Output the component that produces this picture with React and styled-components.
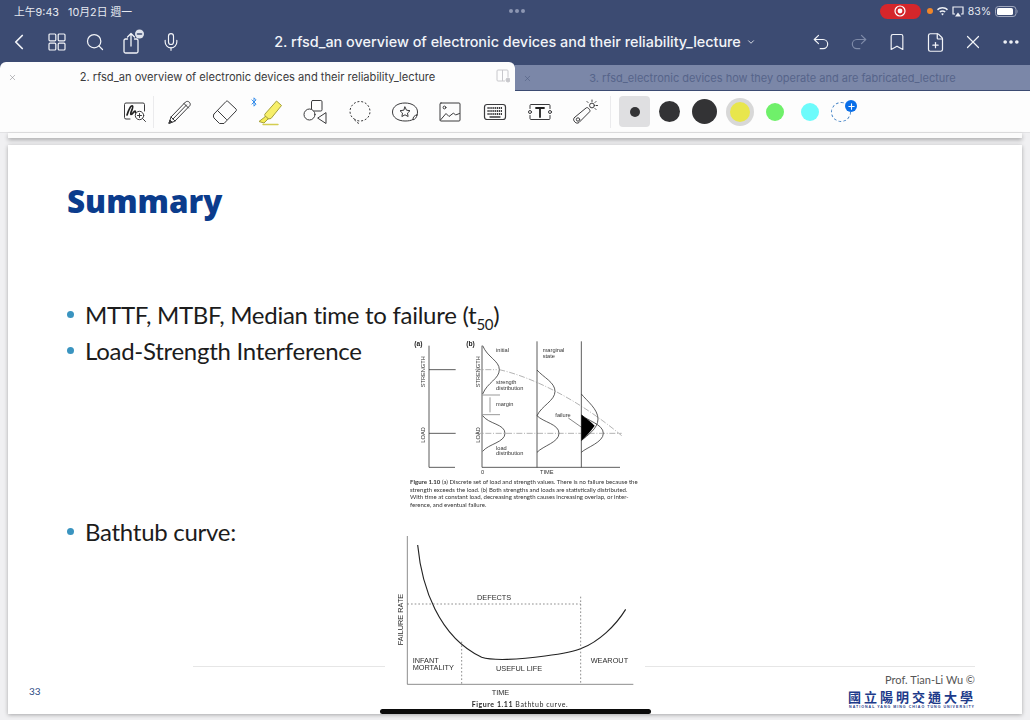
import styled, { createGlobalStyle } from "styled-components";
import { ChevronLeft, ChevronDown, Search, Mic, Undo2, Redo2, Bookmark, FilePlus, X, MoreHorizontal, Bluetooth, Plus } from "lucide-react";

const Global = createGlobalStyle`
  html, body {
    margin: 0;
    padding: 0;
    height: 720px;
    overflow: hidden;
    background: #eeeef0;
    font-family: Inter, "Noto Sans CJK TC", sans-serif;
  }
`;

const Screen = styled.div`
  position: relative;
  width: 1030px;
  height: 720px;
  overflow: hidden;
  display: flex;
  flex-direction: column;
`;

const Header = styled.div`
  background: #3c4b72;
  height: 91px;
  flex-shrink: 0;
  display: flex;
  flex-direction: column;
`;

const StatusBar = styled.div`
  height: 22px;
  padding: 0 11px 0 14px;
  display: grid;
  grid-template-columns: 1fr auto 1fr;
  align-items: center;
  color: #e6e9f0;
  font-size: 10.5px;
`;

const StatusLeft = styled.div`
  display: flex;
  gap: 9px;
  font-size: 10.8px;
`;

const StatusDots = styled.div`
  display: flex;
  gap: 2px;
`;

const Dot = styled.span`
  width: 4px;
  height: 4px;
  border-radius: 50%;
  background: #8d97b3;
`;

const StatusRight = styled.div`
  display: flex;
  justify-content: flex-end;
  align-items: center;
  gap: 4px;
`;

const RecPill = styled.div`
  width: 41px;
  height: 15px;
  border-radius: 8px;
  background: #d5262b;
  display: flex;
  align-items: center;
  justify-content: center;
  margin-right: 2px;
`;

const OrangeDot = styled.span`
  width: 6px;
  height: 6px;
  border-radius: 50%;
  background: #f0862a;
`;

const NavBar = styled.div`
  height: 40px;
  display: grid;
  grid-template-columns: 1fr auto 1fr;
  align-items: center;
`;

const NavGroup = styled.div`
  display: flex;
  justify-content: ${(p) => (p.$end ? "flex-end" : "flex-start")};
`;

const NavBtn = styled.div`
  width: 38px;
  height: 38px;
  display: flex;
  align-items: center;
  justify-content: center;
  color: ${(p) => (p.$dim ? "#7e8aa8" : "#f2f4f8")};
`;

const DocTitle = styled.div`
  color: #f2f4f8;
  font-size: 14.4px;
  font-weight: 500;
  margin-top: -1px;
  display: flex;
  align-items: center;
  gap: 5px;
  white-space: nowrap;
`;

const Tabs = styled.div`
  height: 29px;
  display: grid;
  grid-template-columns: 515px 515px;
  align-items: end;
`;

const Tab = styled.div`
  position: relative;
  height: ${(p) => (p.$active ? "29px" : "25px")};
  margin-bottom: ${(p) => (p.$active ? "0" : "1px")};
  background: ${(p) => (p.$active ? "#fdfdfd" : "#7b87a8")};
  color: ${(p) => (p.$active ? "#3a3a3c" : "#56648a")};
  border-radius: ${(p) => (p.$active ? "6px 6px 0 0" : "0")};
  display: flex;
  align-items: center;
  justify-content: center;
  font-size: ${(p) => (p.$active ? "11.12px" : "11px")};
  white-space: nowrap;
`;

const TabClose = styled.span`
  position: absolute;
  left: 8px;
  top: 50%;
  margin-top: -4px;
  display: flex;
  color: ${(p) => (p.$active ? "#8a8a8e" : "#4f5c80")};
`;

const TabSplit = styled.svg`
  position: absolute;
  right: 5px;
  top: 7px;
`;

const Toolbar = styled.div`
  height: 41px;
  flex-shrink: 0;
  background: #fdfdfd;
  border-bottom: 1px solid #e2e2e4;
  display: flex;
  align-items: center;
  padding-left: 117px;
`;

const Tool = styled.div`
  position: relative;
  width: ${(p) => (p.$narrow ? "36px" : "45px")};
  height: 36px;
  display: flex;
  align-items: center;
  justify-content: center;
`;

const ToolDivider = styled.div`
  width: 1px;
  height: 32px;
  background: #ebebed;
  margin: ${(p) => p.$margin};
`;

const BluetoothMark = styled.span`
  position: absolute;
  left: 1.5px;
  top: 3.5px;
  display: flex;
  color: #2a86e8;
`;

const Swatch = styled.div`
  position: relative;
  width: 35px;
  height: 36px;
  display: flex;
  align-items: center;
  justify-content: center;
`;

const SwatchBox = styled.div`
  width: 31px;
  height: 31px;
  border-radius: 4px;
  background: ${(p) => (p.$on ? "#dfdfe1" : "transparent")};
  display: flex;
  align-items: center;
  justify-content: center;
`;

const SwatchDot = styled.div`
  width: ${(p) => p.$size}px;
  height: ${(p) => p.$size}px;
  border-radius: 50%;
  background: ${(p) => p.$color};
  box-shadow: ${(p) => (p.$ring ? "0 0 0 4px #d8d8d8" : "none")};
`;

const AddRing = styled.div`
  width: 18px;
  height: 18px;
  border-radius: 50%;
  border: 1px dashed #3d7fc4;
  margin-right: 7px;
`;

const AddBadge = styled.span`
  position: absolute;
  left: 18px;
  top: 6.5px;
  width: 12px;
  height: 12px;
  border-radius: 50%;
  background: #0a6fe8;
  color: #fff;
  display: flex;
  align-items: center;
  justify-content: center;
`;

const Reader = styled.div`
  flex: 1;
  padding: 0 8px;
  display: flex;
  flex-direction: column;
  background: #f0f0f2;
`;

const PrevPage = styled.div`
  height: 5px;
  overflow: hidden;
  background: #fbfbfb;
  display: flex;
  justify-content: flex-end;
  padding-right: 50px;
  box-shadow: 0 2px 4px rgba(0, 0, 0, 0.3);
`;

const PrevText = styled.span`
  font-size: 6.5px;
  line-height: 6px;
  color: #555;
  margin-top: -5px;
  filter: blur(0.3px);
`;

const Slide = styled.div`
  position: relative;
  margin-top: 7px;
  height: 569px;
  overflow: hidden;
  background: #fff;
  box-shadow: 0 1px 4px rgba(0, 0, 0, 0.3);
  padding: 36px 0 0 59px;
  box-sizing: border-box;
  font-family: Lato, sans-serif;
`;

const SlideTitle = styled.h1`
  margin: 0;
  height: 40px;
  line-height: 40px;
  font-family: "Open Sans", sans-serif;
  font-size: 31.4px;
  font-weight: 800;
  color: #0b3c8c;
`;

const BulletList = styled.div`
  margin-top: 75px;
  display: flex;
  flex-direction: column;
`;

const Row = styled.div`
  display: flex;
  align-items: flex-start;
`;

const Bullet = styled.div`
  width: ${(p) => p.$width || 800}px;
  height: 36px;
  flex-shrink: 0;
  display: flex;
  align-items: center;
  gap: 11px;
  font-size: 24px;
  letter-spacing: -0.28px;
  color: #1c1c1c;
  white-space: nowrap;
  &::before {
    content: "";
    width: 7px;
    height: 7px;
    border-radius: 50%;
    background: #3a94c0;
  }
`;

const Sub = styled.sub`
  font-size: 15px;
  line-height: 0;
`;

const Figure = styled.div`
  position: relative;
  z-index: 1;
  margin-top: ${(p) => p.$top}px;
  width: ${(p) => p.$width}px;
  background: #fff;
  filter: blur(0.3px);
`;

const Caption = styled.div`
  margin: -36px 0 0 10px;
  padding-bottom: 5.6px;
  font-family: Lato, sans-serif;
  font-size: 6.05px;
  line-height: 7.6px;
  color: #333;
  white-space: nowrap;
  span { display: block; }
  b { font-weight: 700; }
`;

const PageNumber = styled.div`
  position: absolute;
  left: 21px;
  bottom: 17px;
  font-size: 10px;
  color: #2b4a84;
`;

const FooterLine = styled.div`
  position: absolute;
  left: 185px;
  right: 47px;
  top: 521px;
  height: 1px;
  background: #e6e6e6;
`;

const Footer = styled.div`
  position: absolute;
  z-index: 2;
  right: 47px;
  bottom: 4px;
  display: flex;
  flex-direction: column;
  align-items: flex-end;
`;

const Prof = styled.div`
  font-size: 11px;
  color: #555;
  margin-bottom: 3px;
`;

const SchoolZh = styled.div`
  font-family: "Noto Sans CJK TC", sans-serif;
  font-size: 13px;
  line-height: 15px;
  letter-spacing: 3px;
  margin-right: -1px;
  font-weight: 700;
  color: #1d3a8a;
`;

const SchoolEn = styled.div`
  font-family: "Liberation Sans", sans-serif;
  font-size: 3.6px;
  line-height: 5px;
  margin-top: 1.5px;
  letter-spacing: 1px;
  font-weight: 700;
  color: #1d3a8a;
`;

const HomeBar = styled.div`
  position: absolute;
  z-index: 2;
  left: 380px;
  bottom: 6px;
  width: 271px;
  height: 5px;
  border-radius: 3px;
  background: #0b0b0b;
`;

const ToolSvg = ({ children }) => (
  <svg width="28" height="28" viewBox="0 0 28 28" fill="none" stroke="#3a3a3c" strokeWidth="1" strokeLinecap="round" strokeLinejoin="round">
    {children}
  </svg>
);

const InkZoom = () => (
  <ToolSvg>
    <path d="M9 21H5a1.5 1.5 0 0 1-1.5-1.5V6.500A1.500 1.500 0 0 1 5 5h17a1.500 1.500 0 0 1 1.500 1.500V13" />
    <path d="M6 17c2-6 4-10 5.500-9s-3 8-1.500 8.500 3-4 4-3.500 0 3 2 2.500" strokeWidth="1.700" stroke="#222" />
    <circle cx="18.500" cy="17.500" r="4.200" fill="#fdfdfd" />
    <path d="M21.500 20.500l3 3M18.500 15.500v4M16.500 17.500h4" />
  </ToolSvg>
);

const Pencil = () => (
  <ToolSvg>
    <path d="M3 25l2-6L19.500 4c1.200-1 3-.8 4 .4s1 2.800 0 3.600L9 23z" />
    <path d="M5 19l4 4M18 5.500l4.500 4.500M7 21L20.500 7" />
    <path d="M3 25l1-3 2 2z" fill="#3a3a3c" />
  </ToolSvg>
);

const Eraser = () => (
  <ToolSvg>
    <path d="M3 16L15 3.500c.6-.6 1.400-.6 2 0l8 7.500c.6.600.6 1.400 0 2L13 25.500H8.500L3 20c-.8-.800-.8-3.200 0-4z" />
    <path d="M6.500 12.500L15.500 21.500" />
  </ToolSvg>
);

const Highlighter = () => (
  <ToolSvg>
    <path d="M9 16L20.500 3l5 4.500L15 20.500l-3 .5-2.500-2z" fill="#f7ef6a" stroke="#a5a03a" />
    <path d="M9.500 18.500L3 23.500l5 1.500 4-4z" fill="#f5ec55" stroke="#a5a03a" />
    <path d="M7 26.500h15" stroke="#d4cd50" strokeWidth="1.400" />
  </ToolSvg>
);

const Shapes = () => (
  <ToolSvg>
    <rect x="10.500" y="2.500" width="10.500" height="10.500" rx="1.200" />
    <circle cx="8.500" cy="16.500" r="5.500" fill="#fdfdfd" />
    <path d="M25 15v10.500l-8-5.200z" />
  </ToolSvg>
);

const Lasso = () => (
  <svg width="28" height="28" viewBox="0 0 28 28" fill="none" stroke="#3a3a3c" strokeWidth="1" strokeDasharray="2 1.800">
    <path d="M9 21.500C6 20 4 17 4 13.500 4 8 8.500 3.500 14 3.500S24 8 24 13.500 19.500 23 14 23c-1.800 0-3.500-.4-5-1.500zM9 21.500c0 2 2 3 4 4" />
  </svg>
);

const Sticker = () => (
  <ToolSvg>
    <path d="M22 21.500c-2 1.200-5 1.500-8 1.500C7 23 1.500 19.500 1.500 14S7 5 14 5s12.500 3.500 12.500 9c0 1.200-.2 2.500-.7 3.500" />
    <path d="M26 17c-.3 2.500-2 4.500-4 4.800-.3-2.500 1.500-4.800 4-4.800z" />
    <path d="M14 9l1.500 3.200 3.500.5-2.500 2.400.6 3.400-3.100-1.700-3.100 1.700.6-3.400L9 12.700l3.500-.5z" />
  </ToolSvg>
);

const Picture = () => (
  <ToolSvg>
    <rect x="4" y="5" width="20" height="18" rx="1" />
    <circle cx="8.500" cy="9.500" r="1.400" />
    <path d="M4.500 22l5.500-6.500 3 3 4.500-3.500 2 2 4-1.500" />
  </ToolSvg>
);

const Keyboard = () => (
  <ToolSvg>
    <rect x="3.500" y="6.500" width="21" height="15" rx="2.500" strokeWidth="1.200" />
    <path d="M6.500 10h15M6.500 13h15M6.500 16h15" strokeWidth="1.800" strokeDasharray="1.200 0.700" strokeLinecap="butt" />
    <path d="M9 19h10" strokeWidth="1.300" />
  </ToolSvg>
);

const TextBox = () => (
  <ToolSvg>
    <path d="M4 10.500V7.500A1 1 0 0 1 5 6.500h18a1 1 0 0 1 1 1v3M4 17.500v3a1 1 0 0 0 1 1h18a1 1 0 0 0 1-1v-3" />
    <circle cx="4" cy="14" r="1.500" />
    <circle cx="24" cy="14" r="1.500" />
    <path d="M10 10h8M14 10v9" strokeWidth="1.800" stroke="#222" />
  </ToolSvg>
);

const Laser = () => (
  <ToolSvg>
    <path d="M3.500 19.500L15 10c.8-.6 1.800-.5 2.400.2l1.200 1.500c.6.800.5 1.700-.2 2.300L8 24.500c-1.200 1-3 .8-4-.4l-.8-1c-.9-1.200-.8-2.700.3-3.600z" />
    <circle cx="7" cy="21.500" r="1.700" />
    <circle cx="21" cy="7.500" r="2.400" />
    <path d="M21 2v1.500M26.500 7.500H25M25 3.500l-1 1M25 11.500l-1-1M16 3.500l1 1" />
  </ToolSvg>
);

const GridIcon = () => (
  <svg width="18" height="18" viewBox="0 0 18 18" fill="none" stroke="currentColor" strokeWidth="1.200">
    <rect x="1" y="1" width="6.800" height="6.800" rx="1" />
    <rect x="10.200" y="1" width="6.800" height="6.800" rx="1" />
    <rect x="1" y="10.200" width="6.800" height="6.800" rx="1" />
    <rect x="10.200" y="10.200" width="6.800" height="6.800" rx="1" />
  </svg>
);

const ShareIcon = () => (
  <svg width="24" height="26" viewBox="0 0 24 26" fill="none" stroke="currentColor" strokeWidth="1.300" strokeLinecap="round" strokeLinejoin="round">
    <path d="M6.500 10H4.500a1.500 1.500 0 0 0-1.500 1.500v11A1.500 1.500 0 0 0 4.500 24h11a1.500 1.500 0 0 0 1.500-1.500v-11A1.500 1.500 0 0 0 15.500 10h-2" />
    <path d="M10 17V5M6.500 8L10 4.500 13.500 8" />
    <circle cx="18.500" cy="5" r="4.500" fill="#dfe3ec" stroke="none" />
    <path d="M16.500 5h4" stroke="#3c4b72" strokeWidth="1.600" />
  </svg>
);

const WifiIcon = () => (
  <svg width="11" height="9" viewBox="0 0 11 9" fill="#eef0f5">
    <path d="M5.500 0C3.400 0 1.500.8 0 2.200l1.100 1.200C2.300 2.300 3.800 1.600 5.500 1.600s3.200.7 4.400 1.800L11 2.200C9.500.8 7.600 0 5.500 0z" />
    <path d="M5.500 3.200c-1.200 0-2.300.5-3.200 1.200l1.100 1.200c.6-.5 1.300-.8 2.100-.8s1.500.3 2.100.8l1.100-1.200c-.9-.8-2-1.200-3.200-1.200z" />
    <path d="M5.500 6.200c-.6 0-1 .2-1.400.5L5.500 8.500l1.400-1.800c-.4-.3-.8-.5-1.400-.5z" />
  </svg>
);

const AirplayIcon = () => (
  <svg width="12" height="11" viewBox="0 0 12 11" fill="none" stroke="#eef0f5" strokeWidth="1.200">
    <path d="M3 8H1V1h10v7H9" />
    <path d="M6 6.500L9 10.500H3z" fill="#eef0f5" stroke="none" />
  </svg>
);

const BatteryIcon = () => (
  <svg width="24" height="11" viewBox="0 0 24 11" fill="none">
    <rect x="0.500" y="0.500" width="20.500" height="10" rx="3" stroke="#a0a8be" />
    <rect x="2" y="2" width="16" height="7" rx="1.600" fill="#fff" />
    <path d="M22.500 3.800c.7.300.7 3.100 0 3.400z" fill="#a0a8be" />
  </svg>
);

const RecordIcon = () => (
  <svg width="12" height="12" viewBox="0 0 12 12" fill="none">
    <circle cx="6" cy="6" r="5" stroke="#fff" strokeWidth="1.200" />
    <circle cx="6" cy="6" r="2.400" fill="#fff" />
  </svg>
);

const LoadStrengthChart = () => (
  <svg width="250" height="180" viewBox="0 0 750 540" style={{ display: "block" }} fontFamily="Liberation Sans, sans-serif" fontSize="17" fill="#333">
    <g fill="none" stroke="#333" strokeWidth="2.400">
      <path d="M87 35V400H165M87 107H167M87 298H167" />
      <path d="M246 35V400H660M411 22V400M544 22V400" />
      <path d="M248 35C262 70 298 80 298 107C298 135 262 145 248 180" />
      <path d="M248 245C265 270 315 270 315 298C315 325 265 330 248 352" />
      <path d="M411 108C430 130 465 145 465 172C465 200 425 215 411 245" />
      <path d="M411 245C430 265 477 270 477 298C477 325 430 335 411 355" />
      <path d="M544 180C560 200 594 225 594 255C594 285 560 305 544 320" />
      <path d="M544 242C560 260 610 270 610 298C610 325 560 340 544 355" />
      <path d="M248 183H300M248 242H300M270 190V235" strokeWidth="1.500" />
      <path d="M505 252L552 285" strokeWidth="1.800" />
      <path d="M225 107H290M298 107C400 130 540 200 665 305M225 298H665" strokeWidth="1.500" strokeDasharray="18 5 3 5" stroke="#666" />
    </g>
    <path d="M544 242C555 250 575 265 584 275C570 295 555 310 544 320Z" fill="#000" />
    <text x="43" y="35" fontSize="20" fontWeight="700" fill="#222">(a)</text>
    <text x="199" y="35" fontSize="20" fontWeight="700" fill="#222">(b)</text>
    <text transform="translate(74 160) rotate(-90)">STRENGTH</text>
    <text transform="translate(74 326) rotate(-90)">LOAD</text>
    <text transform="translate(241 160) rotate(-90)">STRENGTH</text>
    <text transform="translate(241 326) rotate(-90)">LOAD</text>
    <text x="288" y="55">initial</text>
    <text x="428" y="55">marginal</text>
    <text x="428" y="71">state</text>
    <text x="288" y="150">strength</text>
    <text x="288" y="167">distribution</text>
    <text x="288" y="217">margin</text>
    <text x="466" y="250">failure</text>
    <text x="288" y="347">load</text>
    <text x="288" y="364">distribution</text>
    <text x="243" y="419">0</text>
    <text x="420" y="420">TIME</text>
  </svg>
);

const BathtubChart = () => (
  <svg width="260" height="190" viewBox="0 0 780 570" style={{ display: "block" }} fontFamily="Liberation Sans, sans-serif" fontSize="22" fill="#2c2c2c">
    <g fill="none" stroke="#222">
      <path d="M67 18V463H745" strokeWidth="2" stroke="#555" />
      <path d="M98 45C110 170 160 320 290 382C320 392 400 390 480 378C530 372 570 365 590 355C640 335 690 290 722 238" strokeWidth="3.400" />
      <path d="M67 222H587M587 200V463M230 335V463" strokeWidth="2.200" strokeDasharray="5 6" stroke="#666" />
    </g>
    <text x="276" y="211">DEFECTS</text>
    <text transform="translate(53 346) rotate(-90)">FAILURE RATE</text>
    <text x="83" y="398">INFANT</text>
    <text x="83" y="420">MORTALITY</text>
    <text x="333" y="424">USEFUL LIFE</text>
    <text x="617" y="399">WEAROUT</text>
    <text x="320" y="494">TIME</text>
    <text x="260" y="530" fontSize="21" fontFamily="Lato, sans-serif" textLength="288" lengthAdjust="spacing"><tspan fontWeight="700">Figure 1.11</tspan>{"  Bathtub curve."}</text>
  </svg>
);

const colors = [
  { size: 21, color: "#333335" },
  { size: 25, color: "#333335" },
  { size: 20, color: "#e8e64c", ring: true },
  { size: 18, color: "#6ff06a" },
  { size: 18, color: "#6dfbfb" },
];

const App = () => (
  <Screen>
    <Global />
    <Header>
      <StatusBar>
        <StatusLeft>
          <span>上午9:43</span>
          <span>10月2日 週一</span>
        </StatusLeft>
        <StatusDots>
          <Dot /><Dot /><Dot />
        </StatusDots>
        <StatusRight>
          <RecPill><RecordIcon /></RecPill>
          <OrangeDot />
          <WifiIcon />
          <AirplayIcon />
          <span>83%</span>
          <BatteryIcon />
        </StatusRight>
      </StatusBar>
      <NavBar>
        <NavGroup>
          <NavBtn><ChevronLeft size={26} strokeWidth={1.6} /></NavBtn>
          <NavBtn><GridIcon /></NavBtn>
          <NavBtn><Search size={20} strokeWidth={1.5} /></NavBtn>
          <NavBtn><ShareIcon /></NavBtn>
          <NavBtn><Mic size={20} strokeWidth={1.4} /></NavBtn>
        </NavGroup>
        <DocTitle>
          2. rfsd_an overview of electronic devices and their reliability_lecture
          <ChevronDown size={10} strokeWidth={2} />
        </DocTitle>
        <NavGroup $end>
          <NavBtn><Undo2 size={20} strokeWidth={1.4} /></NavBtn>
          <NavBtn $dim><Redo2 size={20} strokeWidth={1.4} /></NavBtn>
          <NavBtn><Bookmark size={20} strokeWidth={1.4} /></NavBtn>
          <NavBtn><FilePlus size={21} strokeWidth={1.4} /></NavBtn>
          <NavBtn><X size={22} strokeWidth={1.3} /></NavBtn>
          <NavBtn><MoreHorizontal size={20} strokeWidth={2.4} /></NavBtn>
        </NavGroup>
      </NavBar>
      <Tabs>
        <Tab $active>
          <TabClose $active><X size={9} strokeWidth={1.5} /></TabClose>
          2. rfsd_an overview of electronic devices and their reliability_lecture
          <TabSplit width="14" height="14" viewBox="0 0 14 14" fill="none" stroke="#c8c8cc">
            <path d="M9 12H2a1 1 0 0 1-1-1V2a1 1 0 0 1 1-1h9a1 1 0 0 1 1 1v6M6.500 1v11" />
            <circle cx="12" cy="11" r="2" fill="#c8c8cc" />
          </TabSplit>
        </Tab>
        <Tab>
          <TabClose><X size={9} strokeWidth={1.5} /></TabClose>
          3. rfsd_electronic devices how they operate and are fabricated_lecture
        </Tab>
      </Tabs>
    </Header>

    <Toolbar>
      <Tool $narrow><InkZoom /></Tool>
      <ToolDivider $margin="0 3.500px 0 0" />
      <Tool><Pencil /></Tool>
      <Tool><Eraser /></Tool>
      <Tool>
        <BluetoothMark><Bluetooth size={10} strokeWidth={2.2} /></BluetoothMark>
        <Highlighter />
      </Tool>
      <Tool><Shapes /></Tool>
      <Tool><Lasso /></Tool>
      <Tool><Sticker /></Tool>
      <Tool><Picture /></Tool>
      <Tool><Keyboard /></Tool>
      <Tool><TextBox /></Tool>
      <Tool><Laser /></Tool>
      <ToolDivider $margin="0 6px 0 2.500px" />
      <Swatch>
        <SwatchBox $on><SwatchDot $size={10} $color="#333335" /></SwatchBox>
      </Swatch>
      {colors.map((c, i) => (
        <Swatch key={i}>
          <SwatchDot $size={c.size} $color={c.color} $ring={c.ring} />
        </Swatch>
      ))}
      <Swatch>
        <AddRing />
        <AddBadge><Plus size={9} strokeWidth={3} /></AddBadge>
      </Swatch>
    </Toolbar>

    <Reader>
      <PrevPage>
        <PrevText>minimize time and cause rate constant</PrevText>
      </PrevPage>
      <Slide>
        <FooterLine />
        <SlideTitle>Summary</SlideTitle>
        <BulletList>
          <Bullet>
            <span>MTTF, MTBF, Median time to failure (t<Sub>50</Sub>)</span>
          </Bullet>
          <Row>
            <Bullet $width={333}>Load-Strength Interference</Bullet>
            <Figure $top={2} $width={250}>
              <LoadStrengthChart />
              <Caption>
                <span><b>Figure 1.10</b>  (a) Discrete set of load and strength values. There is no failure because the</span>
                <span>strength exceeds the load. (b) Both strengths and loads are statistically distributed.</span>
                <span>With time at constant load, decreasing strength causes increasing overlap, or inter-</span>
                <span>ference, and eventual failure.</span>
              </Caption>
            </Figure>
          </Row>
          <Row>
            <Bullet $width={318}>Bathtub curve:</Bullet>
            <Figure $top={16} $width={260}>
              <BathtubChart />
            </Figure>
          </Row>
        </BulletList>
        <PageNumber>33</PageNumber>
        <Footer>
          <Prof>Prof. Tian-Li Wu ©</Prof>
          <SchoolZh>國立陽明交通大學</SchoolZh>
          <SchoolEn>NATIONAL YANG MING CHIAO TUNG UNIVERSITY</SchoolEn>
        </Footer>
      </Slide>
    </Reader>
    <HomeBar />
  </Screen>
);

export default App;
